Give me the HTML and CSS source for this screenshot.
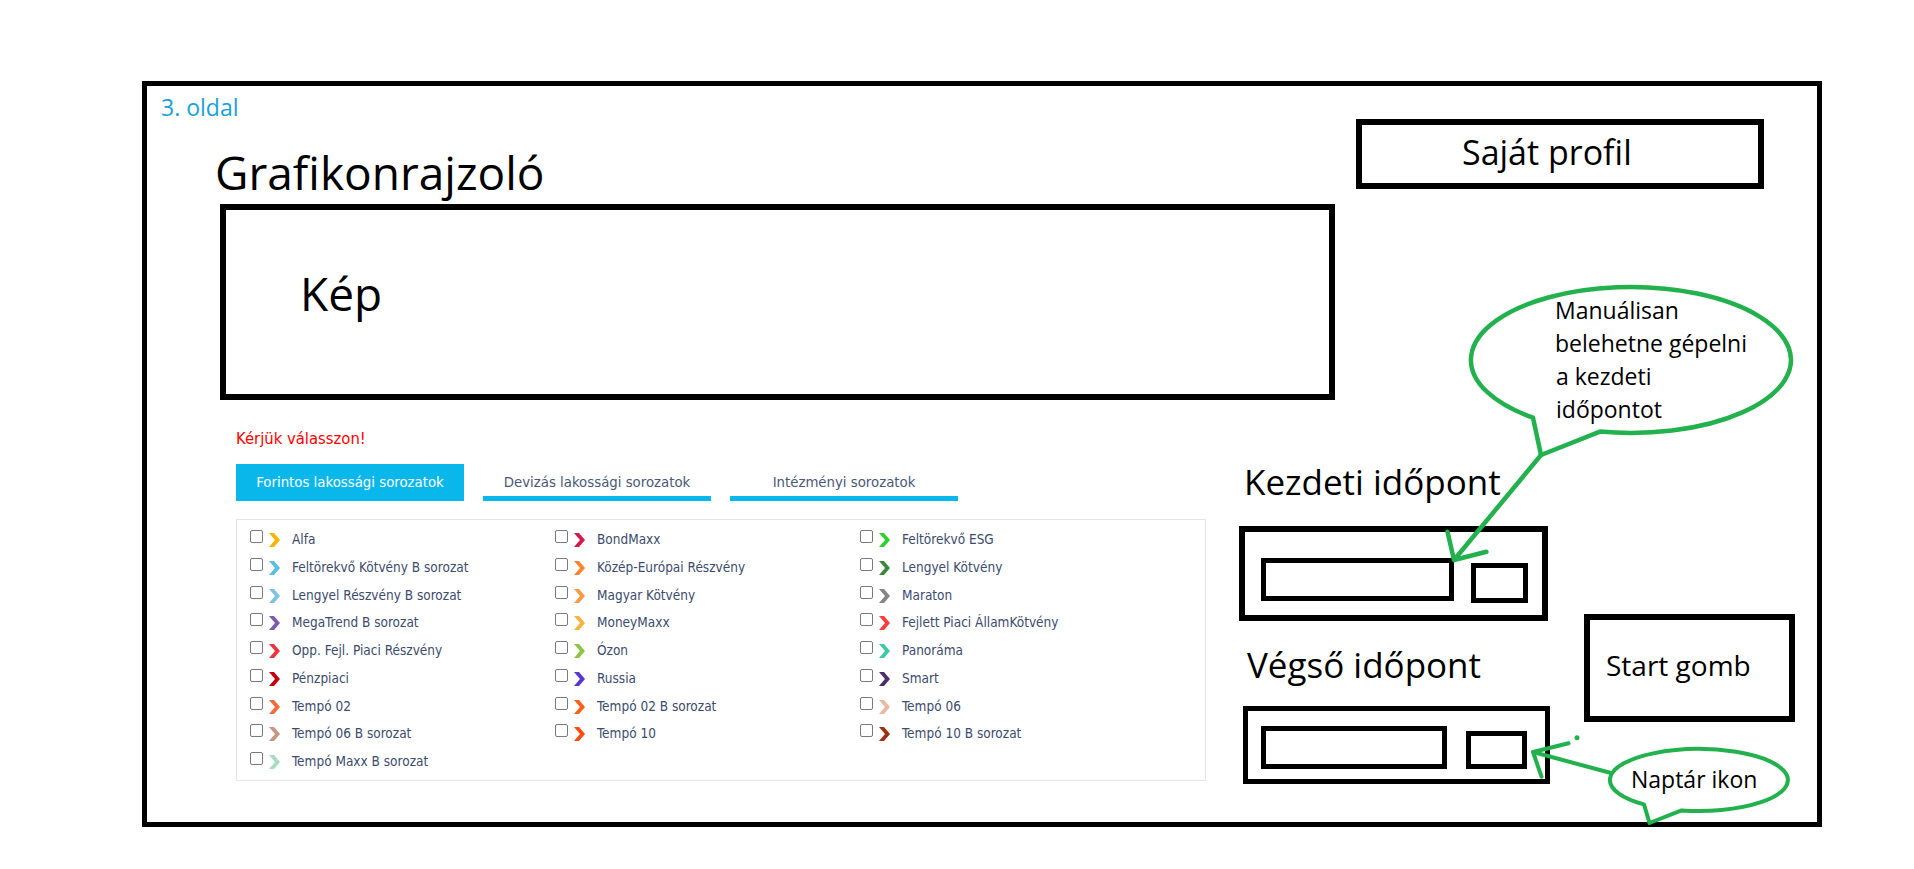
FILE: index.html
```html
<!DOCTYPE html>
<html lang="hu">
<head>
<meta charset="utf-8">
<title>Grafikonrajzoló – 3. oldal</title>
<link rel="stylesheet" href="styles.css">
</head>
<body>
<div class="frame">
  <div class="page-label">3. oldal</div>
  <div class="top-row">
    <h1 class="title">Grafikonrajzoló</h1>
    <div class="profile-btn">Saját profil</div>
  </div>
  <div class="image-box"><span class="image-label">Kép</span></div>
  <div class="bottom">
    <div class="series">
      <p class="prompt">Kérjük válasszon!</p>
      <div class="tabs">
        <div class="tab active">Forintos lakossági sorozatok</div>
        <div class="tab">Devizás lakossági sorozatok</div>
        <div class="tab">Intézményi sorozatok</div>
      </div>
      <div class="fund-panel">
        <div class="fund-grid">
          <label class="fund"><input type="checkbox"><svg class="chev" style="--c:#f7b500" viewBox="0 0 11 14"><polygon points="0,0 5,0 11,7 5,14 0,14 6,7"/></svg><span class="fund-name">Alfa</span></label>
          <label class="fund"><input type="checkbox"><svg class="chev" style="--c:#d5194c" viewBox="0 0 11 14"><polygon points="0,0 5,0 11,7 5,14 0,14 6,7"/></svg><span class="fund-name">BondMaxx</span></label>
          <label class="fund"><input type="checkbox"><svg class="chev" style="--c:#2ed12e" viewBox="0 0 11 14"><polygon points="0,0 5,0 11,7 5,14 0,14 6,7"/></svg><span class="fund-name">Feltörekvő ESG</span></label>

          <label class="fund"><input type="checkbox"><svg class="chev" style="--c:#56bfe0" viewBox="0 0 11 14"><polygon points="0,0 5,0 11,7 5,14 0,14 6,7"/></svg><span class="fund-name">Feltörekvő Kötvény B sorozat</span></label>
          <label class="fund"><input type="checkbox"><svg class="chev" style="--c:#f78633" viewBox="0 0 11 14"><polygon points="0,0 5,0 11,7 5,14 0,14 6,7"/></svg><span class="fund-name">Közép-Európai Részvény</span></label>
          <label class="fund"><input type="checkbox"><svg class="chev" style="--c:#3b8a3b" viewBox="0 0 11 14"><polygon points="0,0 5,0 11,7 5,14 0,14 6,7"/></svg><span class="fund-name">Lengyel Kötvény</span></label>

          <label class="fund"><input type="checkbox"><svg class="chev" style="--c:#80c3e0" viewBox="0 0 11 14"><polygon points="0,0 5,0 11,7 5,14 0,14 6,7"/></svg><span class="fund-name">Lengyel Részvény B sorozat</span></label>
          <label class="fund"><input type="checkbox"><svg class="chev" style="--c:#f99a46" viewBox="0 0 11 14"><polygon points="0,0 5,0 11,7 5,14 0,14 6,7"/></svg><span class="fund-name">Magyar Kötvény</span></label>
          <label class="fund"><input type="checkbox"><svg class="chev" style="--c:#858585" viewBox="0 0 11 14"><polygon points="0,0 5,0 11,7 5,14 0,14 6,7"/></svg><span class="fund-name">Maraton</span></label>

          <label class="fund"><input type="checkbox"><svg class="chev" style="--c:#7d5ca8" viewBox="0 0 11 14"><polygon points="0,0 5,0 11,7 5,14 0,14 6,7"/></svg><span class="fund-name">MegaTrend B sorozat</span></label>
          <label class="fund"><input type="checkbox"><svg class="chev" style="--c:#fdb33b" viewBox="0 0 11 14"><polygon points="0,0 5,0 11,7 5,14 0,14 6,7"/></svg><span class="fund-name">MoneyMaxx</span></label>
          <label class="fund"><input type="checkbox"><svg class="chev" style="--c:#ff3b3b" viewBox="0 0 11 14"><polygon points="0,0 5,0 11,7 5,14 0,14 6,7"/></svg><span class="fund-name">Fejlett Piaci ÁllamKötvény</span></label>

          <label class="fund"><input type="checkbox"><svg class="chev" style="--c:#e8383d" viewBox="0 0 11 14"><polygon points="0,0 5,0 11,7 5,14 0,14 6,7"/></svg><span class="fund-name">Opp. Fejl. Piaci Részvény</span></label>
          <label class="fund"><input type="checkbox"><svg class="chev" style="--c:#8bc543" viewBox="0 0 11 14"><polygon points="0,0 5,0 11,7 5,14 0,14 6,7"/></svg><span class="fund-name">Ózon</span></label>
          <label class="fund"><input type="checkbox"><svg class="chev" style="--c:#3fc7a6" viewBox="0 0 11 14"><polygon points="0,0 5,0 11,7 5,14 0,14 6,7"/></svg><span class="fund-name">Panoráma</span></label>

          <label class="fund"><input type="checkbox"><svg class="chev" style="--c:#c3000f" viewBox="0 0 11 14"><polygon points="0,0 5,0 11,7 5,14 0,14 6,7"/></svg><span class="fund-name">Pénzpiaci</span></label>
          <label class="fund"><input type="checkbox"><svg class="chev" style="--c:#5937d3" viewBox="0 0 11 14"><polygon points="0,0 5,0 11,7 5,14 0,14 6,7"/></svg><span class="fund-name">Russia</span></label>
          <label class="fund"><input type="checkbox"><svg class="chev" style="--c:#4a2f6f" viewBox="0 0 11 14"><polygon points="0,0 5,0 11,7 5,14 0,14 6,7"/></svg><span class="fund-name">Smart</span></label>

          <label class="fund"><input type="checkbox"><svg class="chev" style="--c:#f36c3c" viewBox="0 0 11 14"><polygon points="0,0 5,0 11,7 5,14 0,14 6,7"/></svg><span class="fund-name">Tempó 02</span></label>
          <label class="fund"><input type="checkbox"><svg class="chev" style="--c:#ff5e1a" viewBox="0 0 11 14"><polygon points="0,0 5,0 11,7 5,14 0,14 6,7"/></svg><span class="fund-name">Tempó 02 B sorozat</span></label>
          <label class="fund"><input type="checkbox"><svg class="chev" style="--c:#ebb9a1" viewBox="0 0 11 14"><polygon points="0,0 5,0 11,7 5,14 0,14 6,7"/></svg><span class="fund-name">Tempó 06</span></label>

          <label class="fund"><input type="checkbox"><svg class="chev" style="--c:#c8957f" viewBox="0 0 11 14"><polygon points="0,0 5,0 11,7 5,14 0,14 6,7"/></svg><span class="fund-name">Tempó 06 B sorozat</span></label>
          <label class="fund"><input type="checkbox"><svg class="chev" style="--c:#ff4a0e" viewBox="0 0 11 14"><polygon points="0,0 5,0 11,7 5,14 0,14 6,7"/></svg><span class="fund-name">Tempó 10</span></label>
          <label class="fund"><input type="checkbox"><svg class="chev" style="--c:#9c3112" viewBox="0 0 11 14"><polygon points="0,0 5,0 11,7 5,14 0,14 6,7"/></svg><span class="fund-name">Tempó 10 B sorozat</span></label>

          <label class="fund"><input type="checkbox"><svg class="chev" style="--c:#a6dcbf" viewBox="0 0 11 14"><polygon points="0,0 5,0 11,7 5,14 0,14 6,7"/></svg><span class="fund-name">Tempó Maxx B sorozat</span></label>
        </div>
      </div>
    </div>
    <div class="time-area">
      <div class="time-col">
        <div class="time-label start-label">Kezdeti időpont</div>
        <div class="time-box start-box">
          <div class="date-input"></div>
          <div class="cal-btn"></div>
        </div>
        <div class="time-label end-label">Végső időpont</div>
        <div class="time-box end-box">
          <div class="date-input"></div>
          <div class="cal-btn"></div>
        </div>
      </div>
      <div class="start-btn">Start gomb</div>
    </div>
  </div>
</div>

<svg class="annotations" viewBox="0 0 1914 869" width="1914" height="869">
  <g class="ann-stroke">
    <path d="M 1533 417.7 A 160 73 0 1 1 1600 431.6 L 1541 455 Z"/>
    <path d="M 1541 455 L 1454 560 M 1447.5 531.7 L 1454 560 L 1486.4 551.7"/>
    <path class="thin" d="M 1644 804.4 A 89 31 0 1 1 1681.5 810.4 L 1649.5 823 Z"/>
    <path class="thin" d="M 1611 773 L 1533 752 M 1568.6 743.3 L 1533 752 L 1541.5 776.7"/>
  </g>
  <circle class="ann-dot" cx="1577" cy="737.7" r="2.5"/>
  <text class="ann-text" x="1555" y="319">Manuálisan</text>
  <text class="ann-text" x="1555" y="352">belehetne gépelni</text>
  <text class="ann-text" x="1556" y="385">a kezdeti</text>
  <text class="ann-text" x="1556" y="418">időpontot</text>
  <text class="ann-text" x="1631" y="788">Naptár ikon</text>
</svg>
</body>
</html>
```

FILE: styles.css
```css
html, body {
  margin: 0;
  padding: 0;
  background: #ffffff;
}

body {
  font-family: "Open Sans", "Noto Sans", sans-serif;
  color: #000;
}

.frame {
  margin: 81px 0 0 142px;
  width: 1680px;
  height: 746px;
  box-sizing: border-box;
  border: 5px solid #000;
  padding-top: 10px;
}

.page-label {
  margin-left: 14px;
  font-size: 23px;
  line-height: 23px;
  color: #1a9fe0;
}

.top-row {
  display: flex;
  align-items: flex-start;
}

.title {
  margin: 30px 0 0 68px;
  font-size: 46px;
  line-height: 46px;
  font-weight: 400;
}

.profile-btn {
  margin-left: auto;
  margin-right: 53px;
  width: 408px;
  height: 70px;
  box-sizing: border-box;
  border: 6px solid #000;
  display: flex;
  align-items: center;
  padding: 0 0 4px 100px;
  font-size: 34px;
  line-height: 34px;
}

.image-box {
  margin: 9px 0 0 73px;
  width: 1115px;
  height: 196px;
  box-sizing: border-box;
  border: 6px solid #000;
  padding: 60px 0 0 74px;
}

.image-label {
  display: block;
  font-size: 46px;
  line-height: 46px;
}

.bottom {
  display: flex;
  align-items: flex-start;
}

.series {
  margin-left: 89px;
  width: 970px;
  font-family: "DejaVu Sans Condensed", "DejaVu Sans", sans-serif;
  font-stretch: condensed;
}

.prompt {
  margin: 28px 0 0;
  font-size: 16.5px;
  line-height: 21px;
  color: #ff0000;
}

.tabs {
  display: flex;
  gap: 19px;
  margin-top: 15px;
}

.tab {
  width: 228px;
  height: 37px;
  box-sizing: border-box;
  padding-top: 9px;
  text-align: center;
  font-size: 14.8px;
  line-height: 17px;
  color: #4a5878;
  border-bottom: 5px solid #0ab7ea;
}

.tab.active {
  background: #0ab7ea;
  color: #ffffff;
}

.fund-panel {
  margin-top: 18px;
  height: 262px;
  box-sizing: border-box;
  border: 1px solid #e5e5e5;
  padding: 10px 0 0 13px;
}

.fund-grid {
  display: grid;
  grid-template-columns: repeat(3, 305px);
  grid-auto-rows: 27.75px;
}

.fund {
  display: flex;
  align-items: flex-start;
}

.fund input {
  -webkit-appearance: none;
  appearance: none;
  width: 13px;
  height: 13px;
  margin: 0;
  box-sizing: border-box;
  border: 1px solid #7a7a7a;
  border-radius: 2px;
  background: #fff;
  flex: none;
}

.chev {
  width: 11px;
  height: 14px;
  margin: 3px 0 0 6px;
  flex: none;
  fill: var(--c);
}

.fund-name {
  margin-left: 12px;
  font-size: 13.5px;
  line-height: 18px;
  color: #3c4b6e;
  white-space: nowrap;
}

.time-area {
  margin-left: 33px;
  display: flex;
  align-items: flex-start;
}

.time-col {
  width: 311px;
}

.time-label {
  font-size: 35px;
  line-height: 35px;
  white-space: nowrap;
}

.start-label {
  margin: 64px 0 0 5px;
}

.end-label {
  margin: 26px 0 0 8px;
}

.time-box {
  box-sizing: border-box;
  display: flex;
  align-items: flex-start;
}

.date-input,
.cal-btn {
  box-sizing: border-box;
  border: 5px solid #000;
  flex: none;
}

.start-box {
  margin-top: 27px;
  width: 309px;
  height: 95px;
  border: 6px solid #000;
  padding-left: 16px;
}

.start-box .date-input {
  width: 193px;
  height: 43px;
  margin-top: 26px;
}

.start-box .cal-btn {
  width: 57px;
  height: 40px;
  margin: 31px 0 0 17px;
}

.end-box {
  margin: 24px 0 0 4px;
  width: 307px;
  height: 78px;
  border: 5px solid #000;
  padding-left: 13px;
}

.end-box .date-input {
  width: 186px;
  height: 43px;
  margin-top: 15px;
}

.end-box .cal-btn {
  width: 61px;
  height: 38px;
  margin: 20px 0 0 19px;
}

.start-btn {
  margin: 214px 0 0 34px;
  width: 211px;
  height: 108px;
  box-sizing: border-box;
  border: 6px solid #000;
  display: flex;
  align-items: center;
  padding: 0 0 6px 16px;
  font-size: 28px;
  line-height: 28px;
  white-space: nowrap;
}

.annotations {
  position: absolute;
  left: 0;
  top: 0;
  pointer-events: none;
}

.ann-stroke path {
  fill: none;
  stroke: #22b14c;
  stroke-width: 4.5;
  stroke-linejoin: round;
  stroke-linecap: round;
}

.ann-stroke path.thin {
  stroke-width: 4;
}

.ann-dot {
  fill: #22b14c;
}

.ann-text {
  font-family: "Open Sans", "Noto Sans", sans-serif;
  font-size: 23px;
  fill: #000;
}
```
